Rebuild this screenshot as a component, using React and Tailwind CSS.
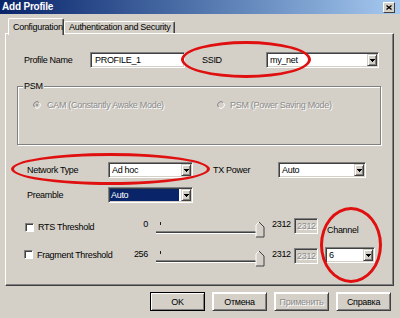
import React from 'react';

const SUNKEN =
  'border border-t-[#808080] border-l-[#808080] border-r-white border-b-white shadow-[inset_1px_1px_0_#404040,inset_-1px_-1px_0_#d4d0c8]';
const DISABLED = 'text-[#8c8c8c] [text-shadow:1px_1px_0_#ffffff]';

function Arrow() {
  return (
    <svg width="5" height="3" viewBox="0 0 5 3" className="block">
      <rect x="0" y="0" width="5" height="1" fill="#000" />
      <rect x="1" y="1" width="3" height="1" fill="#000" />
      <rect x="2" y="2" width="1" height="1" fill="#000" />
    </svg>
  );
}

function DropButton() {
  return (
    <div className="m-[1px] flex w-[10px] shrink-0 items-center justify-center border border-t-[#d4d0c8] border-l-[#d4d0c8] border-r-[#404040] border-b-[#404040] bg-[#d4d0c8] shadow-[inset_1px_1px_0_#fff,inset_-1px_-1px_0_#808080]">
      <Arrow />
    </div>
  );
}

function Combo({ w, value, selected }) {
  return (
    <div className={`flex h-[16px] shrink-0 bg-white ${SUNKEN} ${w}`}>
      {selected ? (
        <div className="m-[1px] flex-1 bg-[#0a246a] pl-[1px] leading-[12px] text-white">{value}</div>
      ) : (
        <div className="flex-1 pl-[3px] leading-[14px]">{value}</div>
      )}
      <DropButton />
    </div>
  );
}

function Radio({ checked }) {
  return (
    <svg width="8" height="8" viewBox="0 0 12 12" className="block shrink-0">
      <circle cx="6" cy="6" r="5" fill="#d4d0c8" />
      <path d="M9.54 2.46 A5 5 0 0 0 2.46 9.54" stroke="#808080" strokeWidth="1.4" fill="none" />
      <path d="M9.54 2.46 A5 5 0 0 1 2.46 9.54" stroke="#ffffff" strokeWidth="1.4" fill="none" />
      {checked && <circle cx="6" cy="6" r="1.8" fill="#9a9a9a" />}
    </svg>
  );
}

function Checkbox({ className }) {
  return (
    <div
      className={`h-[9px] w-[9px] shrink-0 border border-t-[#808080] border-l-[#808080] border-r-white border-b-white bg-white shadow-[inset_1px_1px_0_#404040] ${className}`}
    />
  );
}

function Slider({ className }) {
  return (
    <svg width="110" height="16" viewBox="0 0 110 16" className={`block shrink-0 ${className}`}>
      <rect x="4" y="0" width="1" height="3" fill="#202020" />
      <rect x="0" y="9" width="103" height="1" fill="#808080" />
      <rect x="0" y="10" width="103" height="1" fill="#404040" />
      <rect x="0" y="11" width="103" height="1" fill="#ffffff" />
      <polygon points="100,15 100,3 103,0 108,5 108,15" fill="#d4d0c8" />
      <polyline points="100,15 100,3 103,0" stroke="#ffffff" fill="none" strokeWidth="1" />
      <polyline points="103,0 108,5 108,15 100,15" stroke="#404040" fill="none" strokeWidth="1" />
    </svg>
  );
}

function Button({ children, def, disabled }) {
  return (
    <div
      className={`flex h-[19px] w-[55px] items-center justify-center border shadow-[inset_1px_1px_0_#fff,inset_-1px_-1px_0_#808080] ${
        def ? 'border-black' : 'border-t-white border-l-white border-r-[#404040] border-b-[#404040]'
      } ${disabled ? DISABLED : ''}`}
    >
      {children}
    </div>
  );
}

export default function App() {
  return (
    <div className="relative h-[318px] w-[400px] overflow-hidden whitespace-nowrap bg-[#d4d0c8] text-[9px] leading-[12px] tracking-[-0.3px] text-black font-['Liberation_Sans',Arial,sans-serif]">
      {/* Title bar */}
      <div className="flex h-[14px] items-center justify-between bg-linear-to-r from-[#0a246a] to-[#a6caf0] pl-[2px] pr-[5px]">
        <span className="text-[10px] font-bold leading-[14px] tracking-[-0.2px] text-white">Add Profile</span>
        <div className="flex h-[11px] w-[12px] items-center justify-center border border-t-white border-l-white border-r-[#404040] border-b-[#404040] bg-[#d4d0c8]">
          <svg width="6" height="5" viewBox="0 0 6 5" className="block">
            <path d="M0.5 0.5 L5.5 4.5 M5.5 0.5 L0.5 4.5" stroke="#000" strokeWidth="1.3" />
          </svg>
        </div>
      </div>

      {/* Tabs */}
      <div className="mt-[4px] flex h-[15px] items-end pl-[8px]">
        <div className="relative z-10 -mb-[2px] h-[17px] w-[56px] rounded-t-[2px] border border-b-0 border-t-white border-l-white border-r-[#404040] bg-[#d4d0c8] pl-[4px] pt-[2px] shadow-[inset_-1px_0_0_#808080]">
          Configuration
        </div>
        <div className="h-[12px] w-[111px] rounded-t-[2px] border border-b-0 border-t-white border-l-white border-r-[#404040] pl-[4px] leading-[11px] shadow-[inset_-1px_0_0_#808080]">
          Authentication and Security
        </div>
      </div>

      {/* Tab panel */}
      <div className="ml-[5px] flex h-[253px] w-[389px] flex-col border border-t-white border-l-white border-r-[#404040] border-b-[#404040] shadow-[inset_-1px_-1px_0_#808080]">
        {/* Profile name / SSID */}
        <div className="mt-[18px] flex h-[16px] items-center">
          <span className="ml-[18px] w-[66px] shrink-0">Profile Name</span>
          <div className={`flex h-[16px] w-[95px] shrink-0 items-center bg-white pl-[4px] ${SUNKEN}`}>PROFILE_1</div>
          <span className="ml-[17px] w-[64px] shrink-0">SSID</span>
          <Combo w="w-[113px]" value="my_net" />
        </div>

        {/* PSM group */}
        <div className="ml-[11px] mt-[18px] flex h-[59px] w-[364px] flex-col border border-[#808080] shadow-[1px_1px_0_#fff,inset_1px_1px_0_#fff]">
          <span className="-mt-[7px] ml-[5px] w-fit bg-[#d4d0c8] px-[1px] leading-[12px]">PSM</span>
          <div className={`mt-[7px] flex h-[12px] items-center ${DISABLED}`}>
            <div className="ml-[15px] flex w-[184px] shrink-0 items-center">
              <Radio checked />
              <span className="ml-[6px]">CAM (Constantly Awake Mode)</span>
            </div>
            <div className="flex items-center">
              <Radio />
              <span className="ml-[5px]">PSM (Power Saving Mode)</span>
            </div>
          </div>
        </div>

        {/* Network type / TX power */}
        <div className="mt-[17px] flex h-[16px] items-center">
          <span className="ml-[21px] w-[81px] shrink-0">Network Type</span>
          <Combo w="w-[85px]" value="Ad hoc" />
          <span className="ml-[20px] w-[65px] shrink-0">TX Power</span>
          <Combo w="w-[88px]" value="Auto" />
        </div>

        {/* Preamble */}
        <div className="mt-[9px] flex h-[16px] items-center">
          <span className="ml-[21px] w-[81px] shrink-0">Preamble</span>
          <Combo w="w-[85px]" value="Auto" selected />
        </div>

        {/* RTS threshold */}
        <div className="mt-[15px] flex h-[20px] items-start">
          <Checkbox className="ml-[19px] mt-[5px]" />
          <span className="ml-[4px] mt-[3px] w-[87px] shrink-0">RTS Threshold</span>
          <span className="w-[23px] shrink-0 text-right">0</span>
          <Slider className="ml-[8px] mt-[4px]" />
          <span className="ml-[6px] w-[22px] shrink-0">2312</span>
          <div className={`flex h-[16px] w-[24px] shrink-0 items-center pl-[2px] ${SUNKEN} ${DISABLED}`}>2312</div>
          <span className="ml-[9px] mt-[6px]">Channel</span>
        </div>

        {/* Fragment threshold */}
        <div className="mt-[9px] flex h-[20px] items-start">
          <Checkbox className="ml-[18px] mt-[3px]" />
          <span className="ml-[4px] mt-[2px] w-[88px] shrink-0">Fragment Threshold</span>
          <span className="mt-[1px] w-[23px] shrink-0 text-right">256</span>
          <Slider className="ml-[8px] mt-[4px]" />
          <span className="ml-[6px] mt-[1px] w-[22px] shrink-0">2312</span>
          <div className={`mt-[1px] flex h-[16px] w-[24px] shrink-0 items-center pl-[2px] ${SUNKEN} ${DISABLED}`}>2312</div>
          <div className="ml-[7px]">
            <Combo w="w-[50px]" value="6" />
          </div>
        </div>
      </div>

      {/* Dialog buttons */}
      <div className="mt-[6px] flex justify-end gap-[7px] pr-[9px]">
        <Button def>OK</Button>
        <Button>Отмена</Button>
        <Button disabled>Применить</Button>
        <Button>Справка</Button>
      </div>

      {/* Red annotation ellipses */}
      <div className="pointer-events-none absolute left-[181px] top-[41px] h-[37px] w-[130px] rounded-[50%] border-[3px] border-[#e01010]" />
      <div className="pointer-events-none absolute left-[11px] top-[153px] h-[32px] w-[199px] rounded-[50%] border-[3px] border-[#e01010]" />
      <div className="pointer-events-none absolute left-[320px] top-[207px] h-[76px] w-[62px] rounded-[50%] border-[3px] border-[#e01010]" />
    </div>
  );
}
